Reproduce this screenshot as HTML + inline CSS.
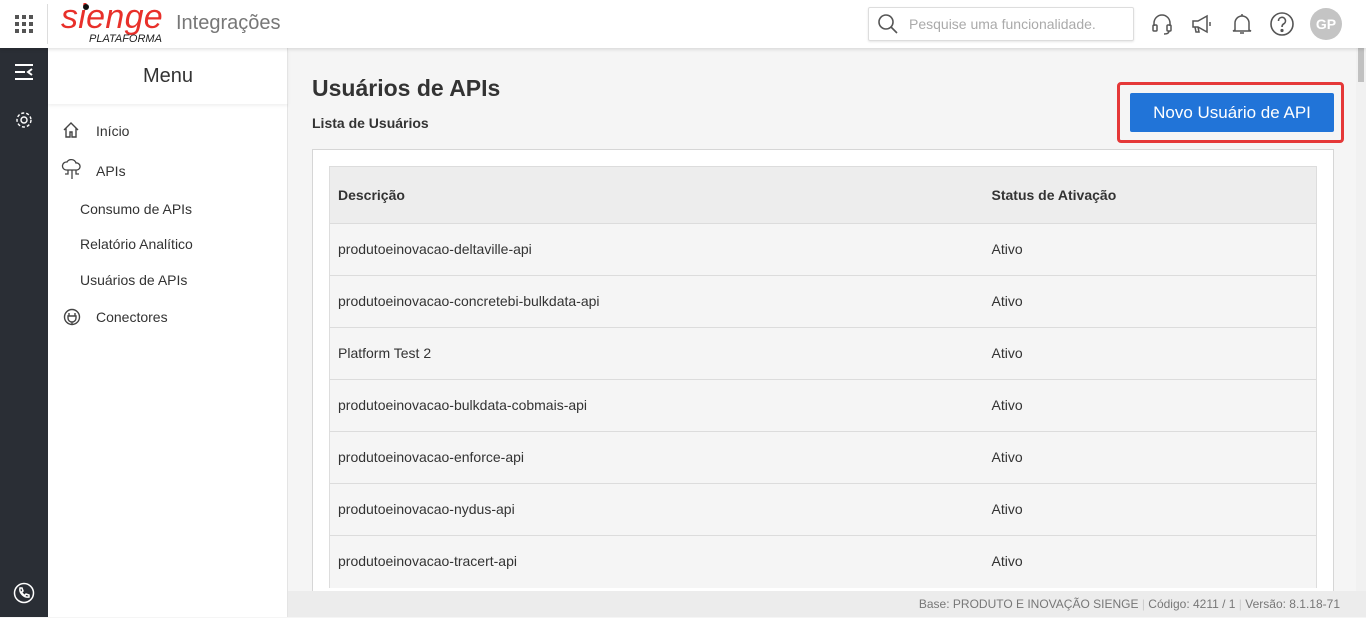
<!DOCTYPE html>
<html><head><meta charset="utf-8"><style>
*{box-sizing:border-box;margin:0;padding:0}
body{width:1366px;height:617px;overflow:hidden;font-family:"Liberation Sans",Arial,sans-serif;background:#f5f5f5;position:relative;color:#333}
.top{position:absolute;left:0;top:0;width:1366px;height:48px;background:#fff;box-shadow:0 1px 4px rgba(0,0,0,.15);z-index:3}
.rail{position:absolute;left:0;top:48px;width:48px;height:569px;background:#2a2e35}
.menu{position:absolute;left:48px;top:48px;width:240px;height:569px;background:#fff;border-right:1px solid #e4e4e4}
.abs{position:absolute}
.mi{position:absolute;font-size:14px;color:#333}
.card{position:absolute;left:312px;top:149px;width:1022px;height:460px;background:#fff;border:1px solid #d6d6d6}
table{position:absolute;left:16px;top:16px;width:988px;border-collapse:collapse;font-size:14px}
td,th{border-top:1px solid #dcdcdc;text-align:left;padding-left:8px;color:#333;font-weight:normal}
th{background:#ededed;height:57px;font-weight:bold}
td{background:#f5f5f5;height:52px;padding-bottom:2px}
tr>*:first-child{width:654px;border-left:1px solid #ddd}
tr>*:last-child{border-right:1px solid #ddd}
.foot{position:absolute;left:288px;top:591px;width:1078px;height:26px;background:#ececec;font-size:12px;color:#777;text-align:right;padding-right:26px;line-height:27px}
</style></head><body>
<div class="top">
 <svg class="abs" style="left:15px;top:15px" width="18" height="18"><g fill="#555"><rect x="0" y="0" width="4" height="4"/><rect x="7" y="0" width="4" height="4"/><rect x="14" y="0" width="4" height="4"/><rect x="0" y="7" width="4" height="4"/><rect x="7" y="7" width="4" height="4"/><rect x="14" y="7" width="4" height="4"/><rect x="0" y="14" width="4" height="4"/><rect x="7" y="14" width="4" height="4"/><rect x="14" y="14" width="4" height="4"/></g></svg>
 <div class="abs" style="left:47px;top:4px;width:1px;height:40px;background:#ddd"></div>
 <div class="abs" style="left:61px;top:-2px;font-size:34px;color:#e8302a;font-style:italic;letter-spacing:0.3px;font-family:'Liberation Sans',sans-serif">sienge</div>
 <div class="abs" style="left:83px;top:4px;width:6px;height:6px;border-radius:3px;background:#111"></div>
 <div class="abs" style="left:89px;top:33px;font-size:11px;font-style:italic;color:#222">PLATAFORMA</div>
 <div class="abs" style="left:176px;top:12px;font-size:20px;color:#777">Integrações</div>
 <div class="abs" style="left:868px;top:7px;width:266px;height:34px;border:1px solid #ddd;border-radius:2px;box-shadow:0 1px 2px rgba(0,0,0,.1)"></div>
 <svg class="abs" style="left:877px;top:13px" width="22" height="22"><circle cx="9" cy="9" r="7" fill="none" stroke="#555" stroke-width="1.6"/><line x1="14" y1="14" x2="20" y2="20" stroke="#555" stroke-width="1.6"/></svg>
 <div class="abs" style="left:909px;top:16px;font-size:14px;color:#aaa">Pesquise uma funcionalidade.</div>
 <svg class="abs" style="left:1150px;top:12px" width="24" height="24" fill="none" stroke="#555" stroke-width="1.5"><path d="M4 14V11a8 8 0 0 1 16 0v3"/><rect x="3" y="13" width="4" height="6" rx="1"/><rect x="17" y="13" width="4" height="6" rx="1"/><path d="M19 19q0 3-5 3"/></svg>
 <svg class="abs" style="left:1190px;top:12px" width="26" height="24" fill="none" stroke="#555" stroke-width="1.5"><path d="M3 9h5l9-5v16l-9-5H3z"/><path d="M5 15l1 5h3l-1-5"/><path d="M20 10v4"/></svg>
 <svg class="abs" style="left:1231px;top:11px" width="22" height="26" fill="none" stroke="#555" stroke-width="1.5"><path d="M4 19V12a7 7 0 0 1 14 0v7l2 1H2z"/><path d="M9 22h4"/><path d="M11 3v2"/></svg>
 <svg class="abs" style="left:1269px;top:12px" width="26" height="26" fill="none" stroke="#555" stroke-width="1.6"><circle cx="13" cy="12" r="11"/><path d="M9.5 9a3.5 3.5 0 1 1 5 3c-1.3.7-1.5 1.5-1.5 3"/><circle cx="13" cy="18.5" r=".8" fill="#555"/></svg>
 <div class="abs" style="left:1310px;top:8px;width:32px;height:32px;border-radius:16px;background:#c4c4c4;color:#fff;font-size:14px;text-align:center;line-height:32px;font-weight:bold">GP</div>
</div>
<div class="rail">
 <svg class="abs" style="left:14px;top:14px" width="20" height="20" stroke="#fff" stroke-width="2" fill="none"><path d="M1 3h18M1 10h10M1 17h18M18 7l-4 3 4 3"/></svg>
 <svg class="abs" style="left:14px;top:62px" width="20" height="20" stroke="#fff" stroke-width="1.4" fill="none"><circle cx="10" cy="10" r="3"/><circle cx="10" cy="10" r="7" stroke-dasharray="3 2"/></svg>
 <svg class="abs" style="left:13px;top:534px" width="22" height="22" stroke="#fff" stroke-width="1.5" fill="none"><circle cx="11" cy="11" r="9.5"/><path d="M7 6l2 0 1 3-1.5 1a7 7 0 0 0 3.5 3.5l1-1.5 3 1v2c-5 1-10-4-9-9z"/></svg>
</div>
<div class="menu">
 <div class="abs" style="left:0;top:0;width:240px;height:56px;box-shadow:0 2px 3px rgba(0,0,0,.06);font-size:20px;color:#333;text-align:center;line-height:56px">Menu</div>
 <svg class="abs" style="left:15px;top:74px" width="16" height="16" fill="none" stroke="#444" stroke-width="1.4"><path d="M1 8L8 1l7 7M3 6v9h4v-5h2v5h4V6"/></svg>
 <div class="mi" style="left:48px;top:75px">Início</div>
 <svg class="abs" style="left:13px;top:111px" width="22" height="22" fill="none" stroke="#444" stroke-width="1.3"><path d="M5 11a4 4 0 0 1 1-8 5 5 0 0 1 9 1 3.5 3.5 0 0 1 1 7z"/><path d="M11 11v9M7 11v4H4M15 11v4h3"/></svg>
 <div class="mi" style="left:48px;top:115px">APIs</div>
 <div class="mi" style="left:32px;top:153px">Consumo de APIs</div>
 <div class="mi" style="left:32px;top:188px">Relatório Analítico</div>
 <div class="mi" style="left:32px;top:224px">Usuários de APIs</div>
 <svg class="abs" style="left:15px;top:260px" width="18" height="18" fill="none" stroke="#444" stroke-width="1.4"><circle cx="9" cy="9" r="7.5"/><path d="M6 5v3M12 5v3M5 8h8v2a4 4 0 0 1-8 0zM9 14v3"/></svg>
 <div class="mi" style="left:48px;top:261px">Conectores</div>
</div>
<div class="abs" style="left:1356px;top:48px;width:10px;height:543px;background:#f1f1f1"><div style="margin:0 2px;height:34px;background:#c1c1c1"></div></div>
<div class="abs" style="left:312px;top:75px;font-size:23px;font-weight:bold;color:#333">Usuários de APIs</div>
<div class="abs" style="left:312px;top:115px;font-size:14px;font-weight:bold;color:#333">Lista de Usuários</div>
<div class="abs" style="left:1117px;top:82px;width:227px;height:61px;border:3px solid #e53838;border-radius:4px"></div>
<div class="abs" style="left:1130px;top:93px;width:204px;height:39px;background:#2174d8;border-radius:2px;color:#fff;font-size:17px;text-align:center;line-height:39px">Novo Usuário de API</div>
<div class="card">
<table>
<tr><th>Descrição</th><th>Status de Ativação</th></tr>
<tr><td>produtoeinovacao-deltaville-api</td><td>Ativo</td></tr>
<tr><td>produtoeinovacao-concretebi-bulkdata-api</td><td>Ativo</td></tr>
<tr><td>Platform Test 2</td><td>Ativo</td></tr>
<tr><td>produtoeinovacao-bulkdata-cobmais-api</td><td>Ativo</td></tr>
<tr><td>produtoeinovacao-enforce-api</td><td>Ativo</td></tr>
<tr><td>produtoeinovacao-nydus-api</td><td>Ativo</td></tr>
<tr><td>produtoeinovacao-tracert-api</td><td>Ativo</td></tr>
</table>
</div>
<div class="foot">Base: PRODUTO E INOVAÇÃO SIENGE <span style="color:#ccc">|</span> Código: 4211 / 1 <span style="color:#ccc">|</span> Versão: 8.1.18-71</div>
</body></html>
